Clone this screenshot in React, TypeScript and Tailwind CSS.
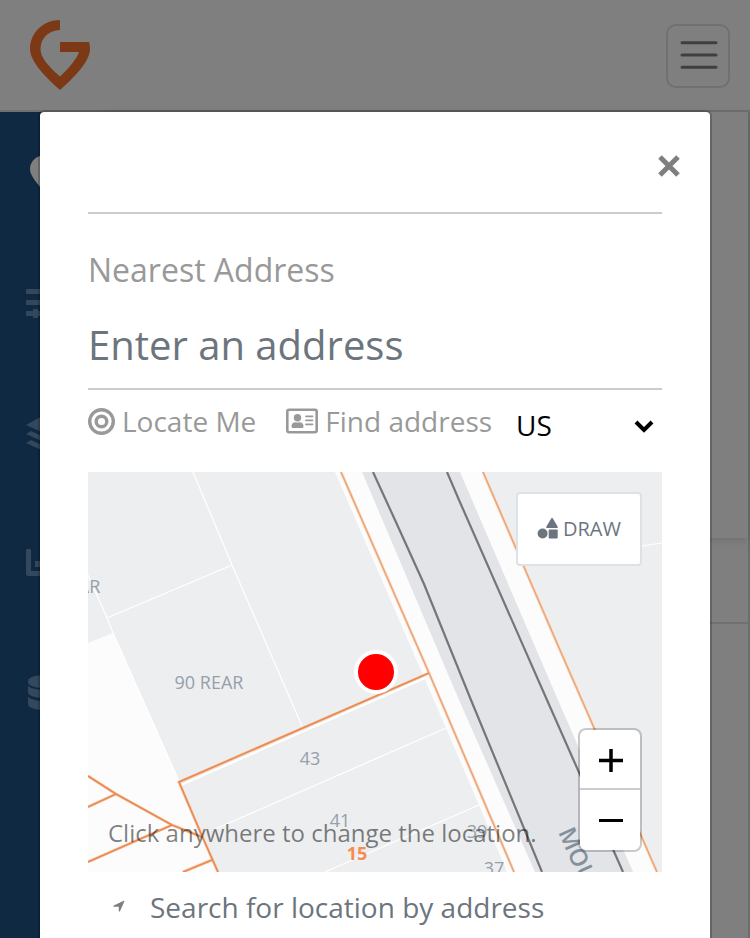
import React from "react";

const navItems = [
  {
    label: "Explore",
    height: "h-[126px]",
    color: "text-white",
    icon: <path d="M20 4C11 4 4 10 4 18c0 7 7 14 16 25 9-11 16-18 16-25 0-8-7-14-16-14Z" />,
  },
  {
    label: "Filters",
    height: "h-[130px]",
    color: "text-[#6890ba]",
    icon: (
      <>
        <rect x="0" y="10" width="52" height="5" rx="1" />
        <rect x="0" y="21" width="52" height="5" rx="1" />
        <rect x="0" y="32" width="52" height="5" rx="1" />
        <rect x="7" y="30" width="5" height="9" rx="1" />
      </>
    ),
  },
  {
    label: "Layers",
    height: "h-[130px]",
    color: "text-[#6890ba]",
    icon: (
      <>
        <path d="M0 16 20 5l20 11-20 9Z" />
        <path d="m0 25 5-3 15 7 15-7 5 3-20 9Z" />
        <path d="m0 34 5-3 15 7 15-7 5 3-20 9Z" />
      </>
    ),
  },
  {
    label: "Reports",
    height: "h-[130px]",
    color: "text-[#6890ba]",
    icon: (
      <>
        <path d="M0 11a1 1 0 0 1 1-1h3a1 1 0 0 1 1 1v21h45v5H2a2 2 0 0 1-2-2Z" />
        <rect x="9" y="22" width="6" height="6" />
        <rect x="20" y="14" width="6" height="14" />
        <rect x="31" y="18" width="6" height="10" />
      </>
    ),
  },
  {
    label: "Data",
    height: "h-[130px]",
    color: "text-[#6890ba]",
    icon: (
      <>
        <path d="M2 12c0-4 8-6 18-6s18 2 18 6v1c0 4-8 6-18 6S2 17 2 13Z" />
        <path d="M2 17c4 3 10 4 18 4s14-1 18-4v6c0 4-8 6-18 6S2 27 2 23Z" />
        <path d="M2 28c4 3 10 4 18 4s14-1 18-4v7c0 4-8 6-18 6S2 39 2 35Z" />
      </>
    ),
  },
];

function Logo() {
  return (
    <svg viewBox="0 0 60 70" className="h-[70px] w-[60px]" aria-hidden="true">
      <path
        fill="#f8732d"
        d="M30 0v10C19 10 10.500 18.500 10.500 29c0 8 7 16.500 19.500 27.500C40 47 46.500 39 49 32H30V22h29.200c.5 2.500.8 5 .8 7 0 10-10.500 24-30 41C10.500 53 0 39 0 29 0 13 13 0 30 0Z"
      />
    </svg>
  );
}

function PageBehind() {
  return (
    <div className="flex h-full flex-col bg-white" aria-hidden="true" inert>
      <header className="flex h-[112px] shrink-0 items-center justify-between border-b-2 border-[#e0e0e0] pr-5 pl-[30px]">
        <a href="#home" aria-label="Home">
          <Logo />
        </a>
        <button
          type="button"
          aria-label="Menu"
          className="mt-0.5 flex h-16 w-16 items-center justify-center rounded-[10px] border-2 border-[#e0e0e0]"
        >
          <svg viewBox="0 0 40 30" className="h-[30px] w-10 text-[#7f7f7f]" stroke="currentColor" strokeWidth="3" strokeLinecap="round">
            <path d="M4 1.700h34M4 14h34M4 26.300h34" />
          </svg>
        </button>
      </header>
      <div className="flex min-h-0 flex-1">
        <nav className="w-[104px] shrink-0 bg-[#205284]">
          {navItems.map((item) => (
            <a
              key={item.label}
              href="#nav"
              aria-label={item.label}
              className={`flex items-center pl-[26px] ${item.height} ${item.color}`}
            >
              <svg viewBox="0 0 52 48" className="h-12 w-[52px]" fill="currentColor">
                {item.icon}
              </svg>
            </a>
          ))}
        </nav>
        <main className="flex-1 border-r-2 border-[#d8d8d8]">
          <div className="h-[426px] shadow-[0_2px_8px_rgba(0,0,0,0.15)]" />
          <div className="h-[86px] border-b-2 border-[#e0e0e0]" />
        </main>
      </div>
    </div>
  );
}

function ParcelMap() {
  return (
    <svg
      viewBox="0 0 574 400"
      preserveAspectRatio="xMidYMid slice"
      className="block h-full w-full font-['Open_Sans','Noto_Sans',sans-serif]"
      role="img"
      aria-label="Parcel map"
    >
      <rect width="574" height="400" fill="#fcfcfc" />
      <path d="M0 0h247l88 203 23 53 33 77 28 67H129L91 309 25 161 0 171Z" fill="#edeef0" />
      <path d="M394 0h180v400h-5L507 261 470 178Z" fill="#edeef0" />
      <path d="M274 0h98l98 228 75 172h-98l-76-172Z" fill="#e3e4e8" />
      <g fill="none" stroke="#fff" strokeWidth="1.200">
        <path d="m105 0 39 93 70 161M144 93 19 146M0 103l19 43 6 15 66 148" />
        <path d="m125 358 233-102M237 400l154-67M554 74l20-3" />
        <path d="M337 206 93 313" strokeWidth="2" />
      </g>
      <g fill="none" stroke="#747678" strokeWidth="2.200">
        <path d="m285 0 22 48 29 64 47 116 71 172M359 0l12 28 88 200 76 172" />
      </g>
      <g fill="none" stroke="#fbdcc6" strokeWidth="3">
        <path d="m253 0 88 201 85 199M395 0l77 178 35 80 62 142" />
      </g>
      <g fill="none" stroke="#eba476" strokeWidth="1.500">
        <path d="m253 0 88 201 85 199M395 0l77 178 35 80 62 142" />
      </g>
      <g fill="none" stroke="#f8cdb0" strokeWidth="3">
        <path d="M341 201 91 310l23 54 16 36M0 304l28 18 56 31 30 12M28 322 0 335M84 353 0 390M124 388l-29 12" />
      </g>
      <g fill="none" stroke="#e98a52" strokeWidth="1.700">
        <path d="M341 201 91 310l23 54 16 36M0 304l28 18 56 31 30 12M28 322 0 335M84 353 0 390M124 388l-29 12" />
      </g>
      <g fill="#95a0aa" fontSize="18" textAnchor="middle">
        <text x="1" y="121">AR</text>
        <text x="121" y="217">90 REAR</text>
        <text x="222" y="293">43</text>
        <text x="252" y="355">41</text>
        <text x="389" y="366">39</text>
        <text x="406" y="403">37</text>
      </g>
      <text x="269" y="388" textAnchor="middle" fontSize="18" fontWeight="700" fill="#f58c50">
        15
      </text>
      <text transform="translate(470 360) rotate(66)" fontSize="24" fontWeight="600" fill="#84919b">
        MOUNT
      </text>
      <circle cx="288" cy="200" r="20" fill="#f00" stroke="#fff" strokeWidth="4" />
    </svg>
  );
}

function LocationMap() {
  return (
    <div className="relative h-[400px] overflow-hidden">
      <ParcelMap />
      <button
        type="button"
        className="absolute top-5 right-5 flex h-[74px] w-[126px] items-center justify-center gap-1 rounded border-2 border-[#dee2e6] bg-white text-[20px] text-[#6c757d]"
      >
        <svg viewBox="0 0 22 22" className="h-[22px] w-[22px] shrink-0" fill="currentColor" aria-hidden="true">
          <path d="M14.200.500a1 1 0 0 1 1.700 0l4.700 8a1 1 0 0 1-.8 1.500h-9.600a1 1 0 0 1-.8-1.500Z" />
          <circle cx="5.600" cy="15.500" r="5" />
          <rect x="11.700" y="11.500" width="9" height="9" rx="1" />
        </svg>
        DRAW
      </button>
      <div className="absolute right-5 bottom-5 w-16 rounded-lg border-2 border-black/20 bg-white bg-clip-padding text-black">
        <button type="button" aria-label="Zoom in" className="flex h-[60px] w-full items-center justify-center border-b-2 border-[#ccc]">
          <svg viewBox="0 0 26 26" className="h-[26px] w-[26px]" stroke="currentColor" strokeWidth="4" aria-hidden="true">
            <path d="M2 14.500h24M14 3v23" strokeWidth="3.500" />
          </svg>
        </button>
        <button type="button" aria-label="Zoom out" className="flex h-[60px] w-full items-center justify-center">
          <svg viewBox="0 0 26 26" className="h-[26px] w-[26px]" stroke="currentColor" strokeWidth="3" aria-hidden="true">
            <path d="M2 13.500h24" />
          </svg>
        </button>
      </div>
      <p className="pointer-events-none absolute bottom-5 left-5 text-2xl leading-[38px] text-black/50">
        Click anywhere to change the location.
      </p>
    </div>
  );
}

function LocationDialog() {
  return (
    <div
      role="dialog"
      aria-modal="true"
      aria-label="Choose a location"
      className="mx-[38px] mt-[110px] rounded-md border-2 border-black/20 bg-white bg-clip-padding px-12 pb-24"
    >
      <div className="-mr-5 flex h-[100px] items-center justify-end pt-2">
        <button type="button" aria-label="Close" className="flex h-7 w-[26px] items-center justify-center text-[#7f7f7f]">
          <svg viewBox="0 0 22 22" className="h-[22px] w-[22px]" stroke="currentColor" strokeWidth="5" aria-hidden="true">
            <path d="m2 2 18 18M20 2 2 20" />
          </svg>
        </button>
      </div>
      <hr className="border-t-2 border-[#ccc]" />
      <label htmlFor="address" className="mt-8 block text-[32px] leading-[48px] text-[#999]">
        Nearest Address
      </label>
      <input
        id="address"
        type="text"
        placeholder="Enter an address"
        className="mt-1.5 block h-[90px] w-full border-b-2 border-[#ccc] text-[40px] text-[#495057] outline-none placeholder:text-[#6c757d]"
      />
      <div className="flex h-[82px] items-start text-[28px] leading-[42px] text-[#999]">
        <button type="button" className="mt-2.5 flex shrink-0 items-center gap-[7px]">
          <svg viewBox="0 0 27 27" className="h-[27px] w-[27px]" fill="none" stroke="currentColor" strokeWidth="3.400" aria-hidden="true">
            <circle cx="13.500" cy="13.500" r="11.800" />
            <circle cx="13.500" cy="13.500" r="5.300" />
          </svg>
          Locate Me
        </button>
        <button type="button" className="mt-2.5 ml-[30px] flex shrink-0 items-center gap-[7px]">
          <svg viewBox="0 0 32 26" className="h-[26px] w-8" fill="currentColor" aria-hidden="true">
            <rect x="1.300" y="1.800" width="29.400" height="22.500" rx="2" fill="none" stroke="currentColor" strokeWidth="2.600" />
            <circle cx="11.500" cy="9.800" r="3.700" />
            <path d="M5.500 18.500c0-3 1.800-4.300 4-4.300.7.300 3.300.3 4 0 2.300 0 4 1.300 4 4.300 0 .9-.5 1.500-1.300 1.500H6.800c-.8 0-1.300-.6-1.300-1.500Z" />
            <path d="M20 8.300h6.500M20 12.300h6.500M20 16.300h6.500" stroke="currentColor" strokeWidth="1.800" strokeLinecap="round" />
          </svg>
          Find address
        </button>
        <div className="relative mt-3.5 ml-auto w-[146px]">
          <select
            aria-label="Country"
            defaultValue="US"
            className="block h-[42px] w-full appearance-none bg-transparent leading-[42px] text-black outline-none"
          >
            <option>US</option>
            <option>CA</option>
          </select>
          <svg
            viewBox="0 0 20 14"
            className="pointer-events-none absolute top-4 right-2 h-[14px] w-5 text-black"
            fill="none"
            stroke="currentColor"
            strokeWidth="4"
            aria-hidden="true"
          >
            <path d="m2 2 8 8 8-8" />
          </svg>
        </div>
      </div>
      <LocationMap />
      <a href="#search" className="mt-3.5 flex items-center pl-6 text-[28px] leading-[42px] text-[#6c757d]">
        <svg viewBox="0 0 14 14" className="mr-6 h-[14px] w-[14px] text-[#7f7f7f]" fill="currentColor" aria-hidden="true">
          <path d="M11.700.8c.4-.2.800.2.600.6L8 11.200c-.3.600-1.200.4-1.200-.2V6.800H2c-.8 0-.9-1-.2-1.300Z" />
        </svg>
        Search for location by address
      </a>
    </div>
  );
}

export default function App() {
  return (
    <div className="relative h-screen overflow-hidden font-['Open_Sans','Noto_Sans',sans-serif]">
      <PageBehind />
      <div className="absolute inset-0 overflow-hidden bg-black/50">
        <LocationDialog />
      </div>
    </div>
  );
}
